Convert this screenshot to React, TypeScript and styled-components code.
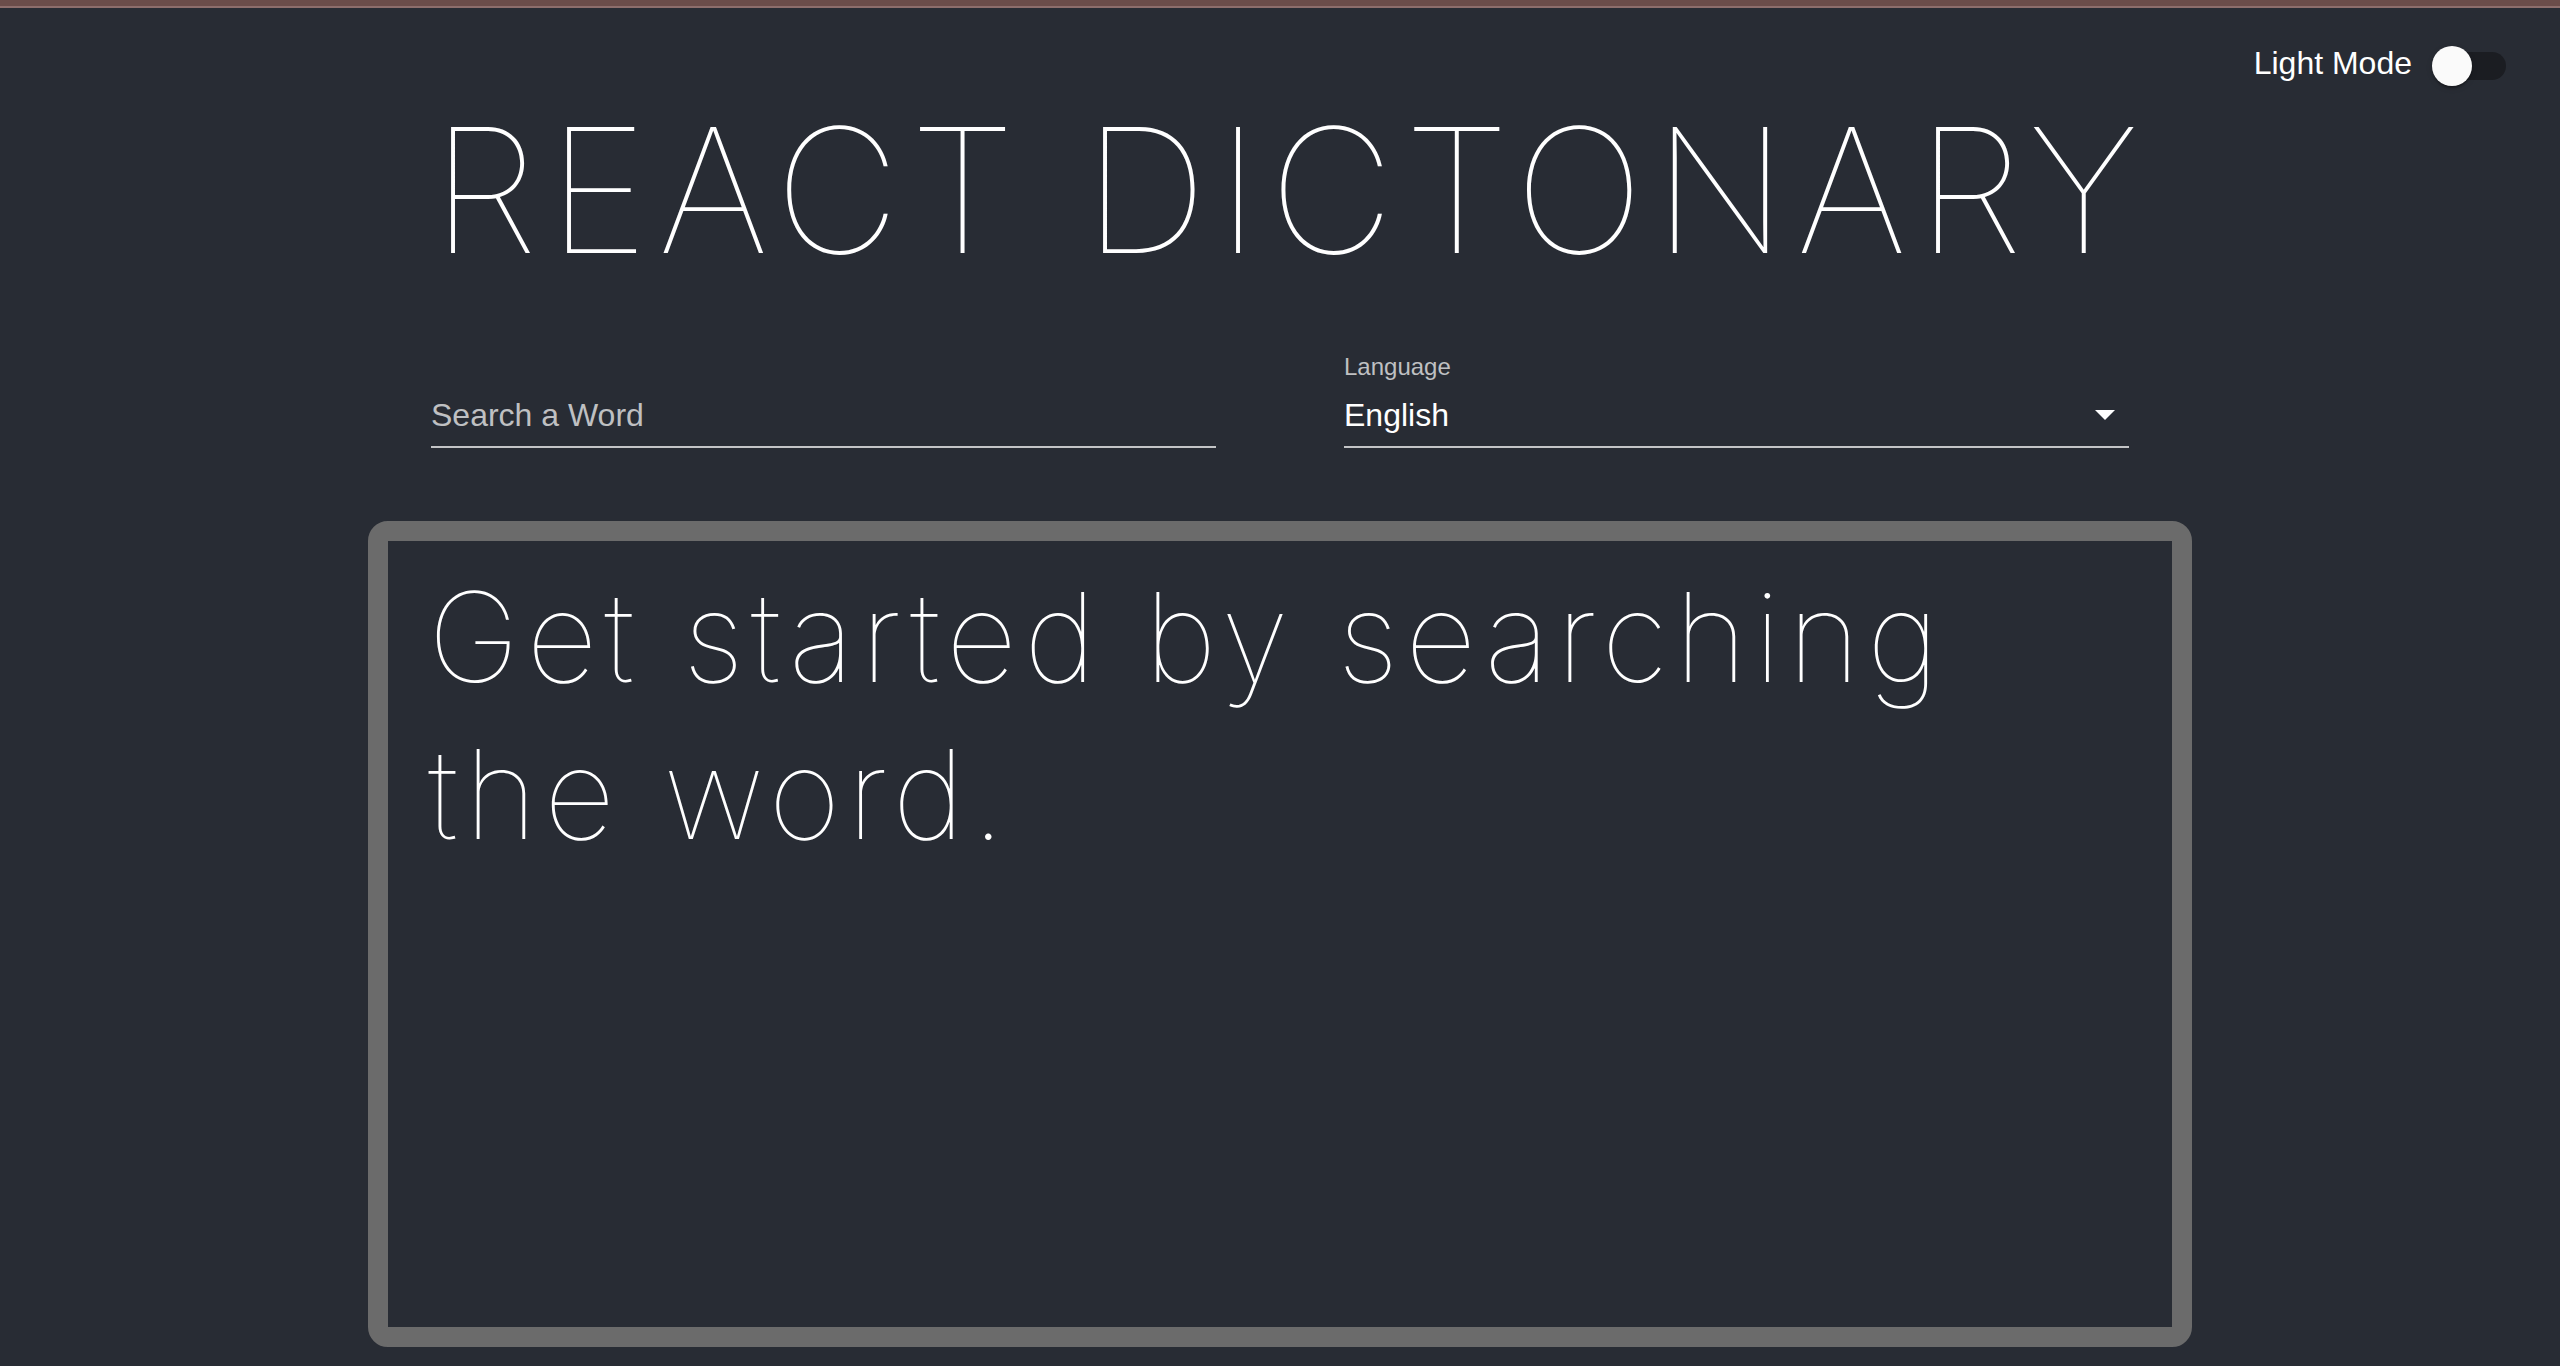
import React from "react";
import styled, { createGlobalStyle } from "styled-components";

const GlobalStyle = createGlobalStyle`
  html, body {
    margin: 0;
    padding: 0;
    background: #282c34;
  }
  body {
    font-family: "Liberation Sans", Arial, sans-serif;
    color: #ffffff;
  }
`;

const Page = styled.div`
  min-height: 1366px;
  background: #282c34;
  display: flex;
  flex-direction: column;
`;

const TopStrip = styled.div`
  height: 6px;
  background: #6b4d4a;
  border-bottom: 2px solid #8d6e6c;
`;

const Header = styled.header`
  height: 96px;
  box-sizing: border-box;
  padding: 20px 30px 0 0;
  display: flex;
  justify-content: flex-end;
  align-items: flex-start;
`;

const ToggleLabel = styled.label`
  display: flex;
  align-items: center;
  gap: 2px;
  cursor: pointer;
`;

const ToggleText = styled.span`
  font-family: "Liberation Sans", Arial, sans-serif;
  font-size: 32px;
  line-height: 32px;
  color: #ffffff;
  padding-bottom: 6px;
`;

const SwitchRoot = styled.span`
  position: relative;
  width: 116px;
  height: 76px;
  box-sizing: border-box;
  padding: 0 24px;
  display: flex;
  align-items: center;
`;

const SwitchTrack = styled.span`
  width: 68px;
  height: 28px;
  border-radius: 14px;
  background: #1b1d22;
`;

const SwitchThumb = styled.span<{ $on: boolean }>`
  position: absolute;
  top: 18px;
  left: ${(p) => (p.$on ? "58px" : "18px")};
  width: 40px;
  height: 40px;
  border-radius: 50%;
  background: #fafafa;
  box-shadow: 0 4px 2px -2px rgba(0, 0, 0, 0.2), 0 2px 2px 0 rgba(0, 0, 0, 0.14),
    0 2px 6px 0 rgba(0, 0, 0, 0.12);
`;

const Title = styled.h1`
  margin: 0;
  padding-left: 20px;
  font-family: Inter, "Liberation Sans", sans-serif;
  font-weight: 100;
  font-size: 173px;
  line-height: 173px;
  text-align: center;
  color: #ffffff;
  letter-spacing: 9.5px;
  white-space: nowrap;
`;

const FieldsRow = styled.div`
  margin: 78px auto 0;
  width: 1698px;
  display: flex;
  gap: 128px;
  align-items: flex-end;
`;

const Field = styled.div`
  flex: 1;
  display: flex;
  flex-direction: column;
  gap: 16px;
`;

const FieldLabel = styled.span`
  font-size: 24px;
  line-height: 24px;
  color: #bfc0c2;
`;

const FieldBox = styled.div`
  position: relative;
  display: flex;
  align-items: center;
  padding-bottom: 11px;
  border-bottom: 2px solid #c3c4c6;
`;

const TextInput = styled.input`
  flex: 1;
  border: none;
  outline: none;
  background: transparent;
  padding: 0;
  margin: 0;
  height: 40px;
  font-family: "Liberation Sans", Arial, sans-serif;
  font-size: 32px;
  line-height: 40px;
  color: #ffffff;
  &::placeholder {
    color: #bfc0c2;
    opacity: 1;
  }
`;

const SelectValue = styled.span`
  flex: 1;
  font-size: 32px;
  line-height: 40px;
  color: #ffffff;
`;

const Arrow = styled.svg`
  width: 20px;
  height: 10px;
  margin-right: 14px;
  fill: #ffffff;
`;

const ResultBox = styled.section`
  margin: 73px auto 0;
  width: 1824px;
  height: 826px;
  box-sizing: border-box;
  border: 20px solid #6b6b6b;
  border-radius: 20px;
  padding: 18px 40px 0;
`;

const Hint = styled.p`
  margin: 0;
  max-width: 1640px;
  font-family: Inter, "Liberation Sans", sans-serif;
  font-weight: 100;
  font-size: 124px;
  line-height: 157px;
  letter-spacing: 6.9px;
  color: #ffffff;
`;

export default function App() {
  const [light, setLight] = React.useState(false);
  return (
    <>
      <GlobalStyle />
      <Page>
        <TopStrip />
        <Header>
          <ToggleLabel onClick={() => setLight(!light)}>
            <ToggleText>Light Mode</ToggleText>
            <SwitchRoot>
              <SwitchTrack />
              <SwitchThumb $on={light} />
            </SwitchRoot>
          </ToggleLabel>
        </Header>
        <Title>REACT DICTONARY</Title>
        <FieldsRow>
          <Field>
            <FieldBox>
              <TextInput placeholder="Search a Word" />
            </FieldBox>
          </Field>
          <Field>
            <FieldLabel>Language</FieldLabel>
            <FieldBox>
              <SelectValue>English</SelectValue>
              <Arrow viewBox="0 0 20 10">
                <path d="M0 0 L10 10 L20 0 Z" />
              </Arrow>
            </FieldBox>
          </Field>
        </FieldsRow>
        <ResultBox>
          <Hint>Get started by searching the word.</Hint>
        </ResultBox>
      </Page>
    </>
  );
}
